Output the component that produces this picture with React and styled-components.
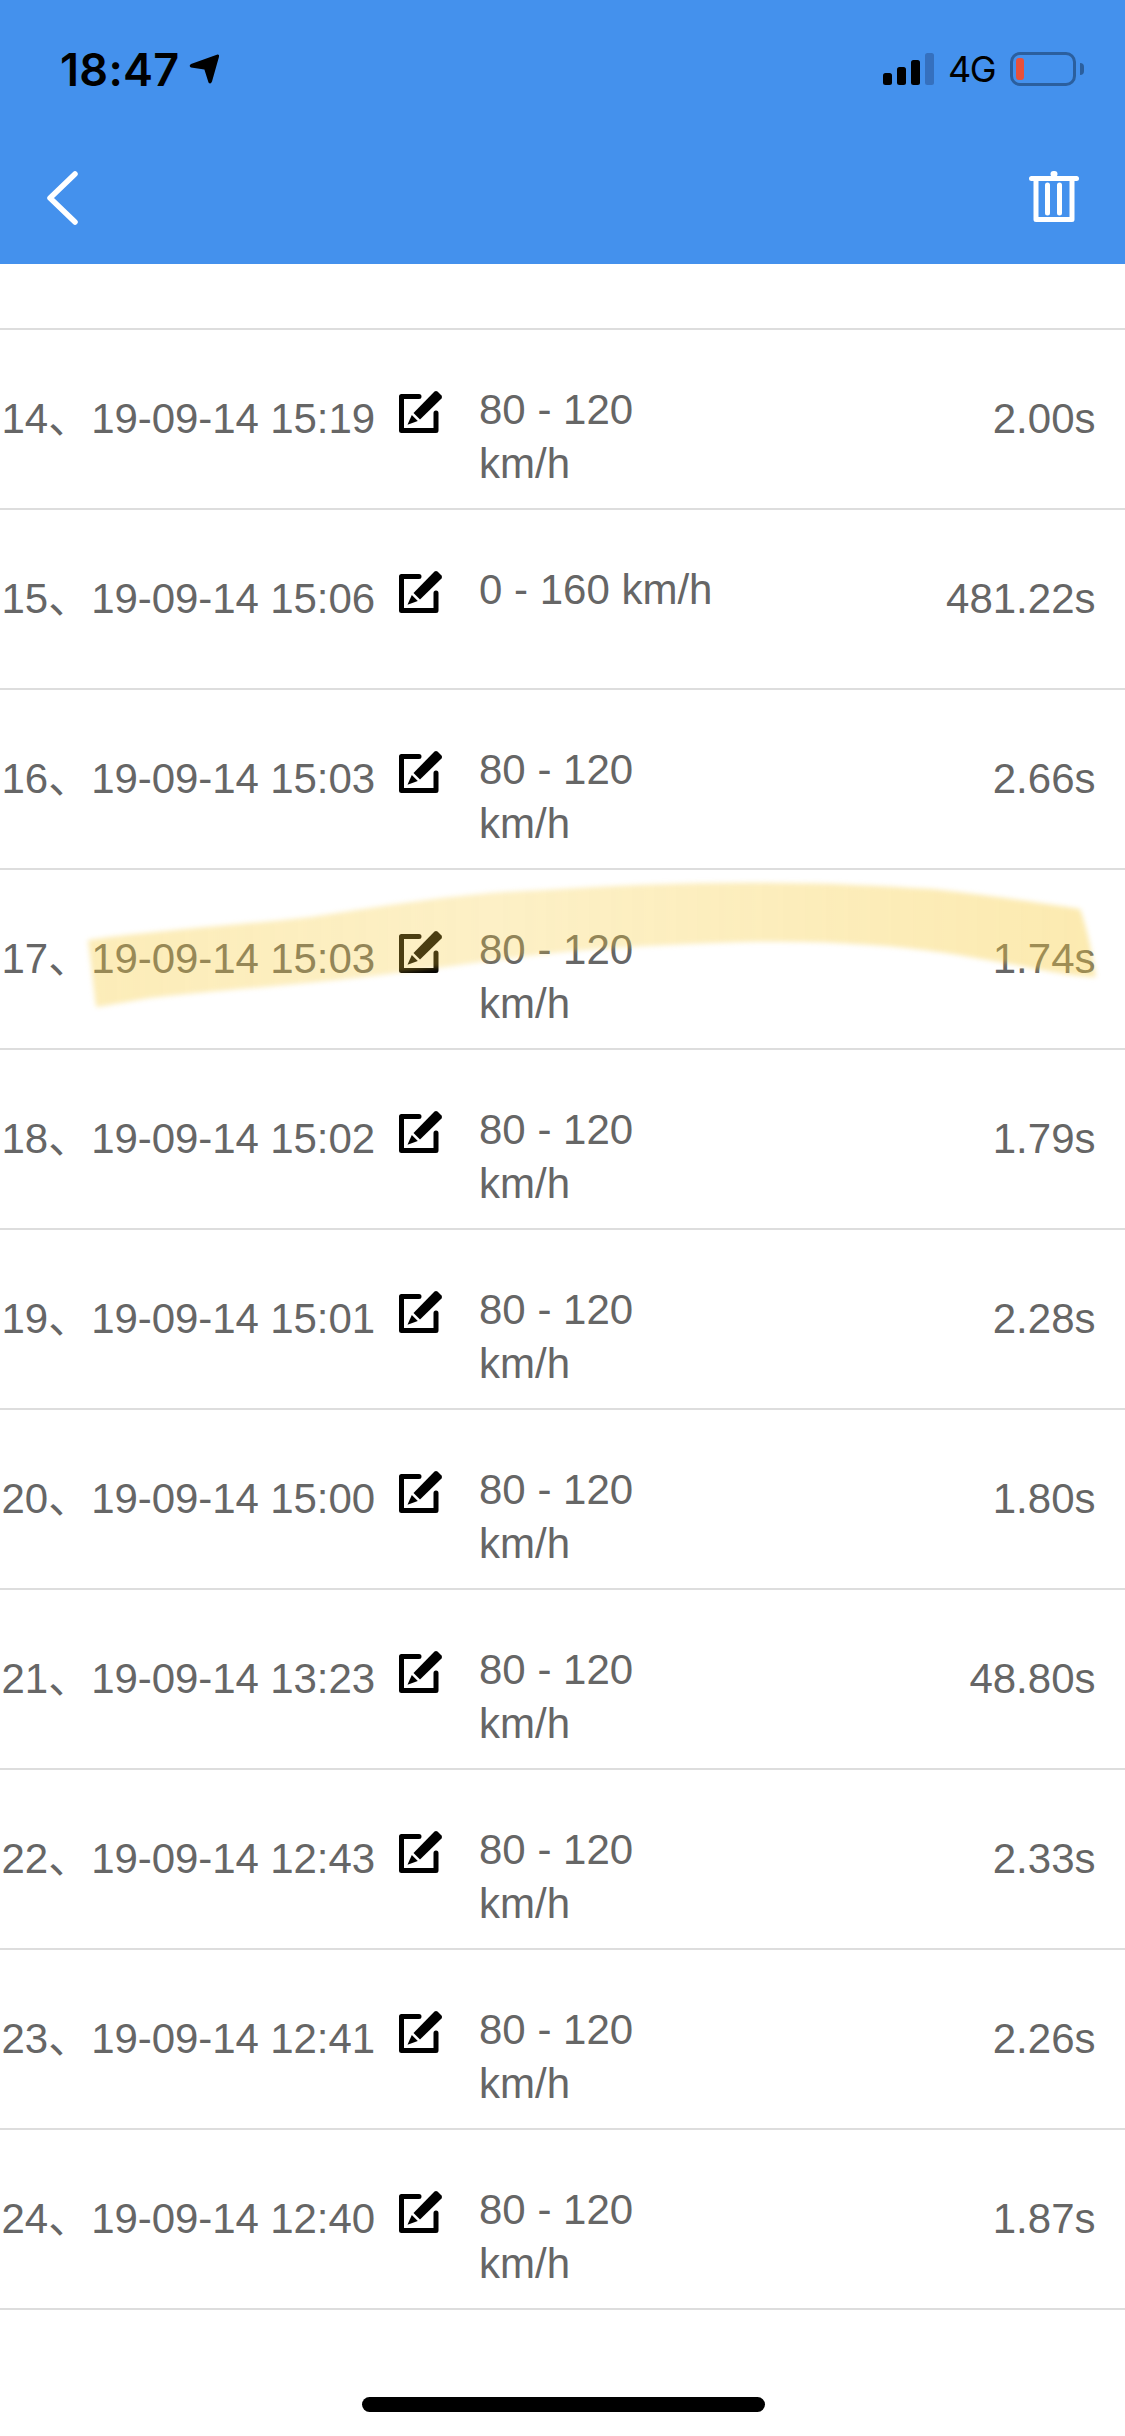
import React from "react";
import styled, { createGlobalStyle } from "styled-components";

const Global = createGlobalStyle`
  html, body { margin: 0; padding: 0; background: #fff; }
  #root { width: 1125px; height: 2436px; overflow: hidden; }
`;

const Page = styled.div`
  position: relative;
  width: 1125px;
  height: 2436px;
  background: #fff;
  display: flex;
  flex-direction: column;
  font-family: "Liberation Sans", "Noto Sans CJK SC", sans-serif;
`;

const Header = styled.header`
  height: 264px;
  background: #4491ed;
  display: flex;
  flex-direction: column;
  flex: none;
`;

const StatusBar = styled.div`
  height: 138px;
  display: flex;
  align-items: center;
  padding: 0 42px 0 60px;
  color: #000;
  box-sizing: border-box;
`;

const Time = styled.span`
  font-family: Inter, "Liberation Sans", sans-serif;
  font-size: 45px;
  font-weight: 600;
  line-height: 1;
  letter-spacing: 0.3px;
`;

const Spacer = styled.div`
  flex: 1;
`;

const Signal = styled.div`
  display: flex;
  align-items: flex-end;
  gap: 5px;
  height: 32px;
`;

const Bar = styled.i`
  display: block;
  width: 9px;
  height: ${(p) => p.$h}px;
  border-radius: 2.5px;
  background: ${(p) => (p.$dim ? "#3570be" : "#000")};
`;

const Net = styled.span`
  font-family: Inter, "Liberation Sans", sans-serif;
  font-size: 36px;
  font-weight: 400;
  line-height: 1;
  letter-spacing: -1.5px;
  margin: 0 15px 0 13.5px;
`;

const Battery = styled.div`
  position: relative;
  box-sizing: border-box;
  width: 66px;
  height: 34px;
  border: 3px solid #2b5f9e;
  border-radius: 10px;
  padding: 3px;
  margin-right: 7px;
`;

const BatteryFill = styled.div`
  width: 8px;
  height: 22px;
  border-radius: 3px;
  background: #e8503a;
`;

const BatteryNub = styled.div`
  position: absolute;
  right: -11px;
  top: 8px;
  width: 4px;
  height: 12px;
  border-radius: 0 6px 6px 0;
  background: #2b5f9e;
`;

const NavBar = styled.nav`
  height: 126px;
  display: flex;
  align-items: flex-start;
  justify-content: space-between;
  padding: 33px 46px 0 46px;
  box-sizing: border-box;
`;

const List = styled.main`
  padding-top: 64px;
  flex: none;
`;

const Row = styled.div`
  position: relative;
  box-sizing: border-box;
  height: 180px;
  border-top: 2px solid #ddd;
  display: grid;
  grid-template-columns: 398px 81px 245px 1fr;
  padding-right: 29.5px;
  color: #666;
  font-size: 42px;
  line-height: 53px;
`;

const RowEnd = styled.div`
  height: 2px;
  background: #ddd;
`;

const DateCell = styled.div`
  padding: 62px 0 0 1.5px;
  white-space: nowrap;
`;

const DateText = styled.span`
  margin-left: 1px;
  letter-spacing: -0.08px;
`;

const IconCell = styled.div`
  padding-top: 60px;
  line-height: 0;
`;

const RangeCell = styled.div`
  padding-top: 53px;
  line-height: 54px;
`;

const DurationCell = styled.div`
  padding-top: 62px;
  text-align: right;
  white-space: nowrap;
`;

const Highlight = styled.svg`
  position: absolute;
  left: 0;
  top: -10px;
  width: 1125px;
  height: 160px;
  pointer-events: none;
  filter: blur(2.5px);
`;

const HomeBar = styled.div`
  position: absolute;
  left: 362px;
  bottom: 24px;
  width: 403px;
  height: 15px;
  border-radius: 8px;
  background: #000;
`;

const ArrowIcon = styled.svg`
  margin-left: 8px;
`;

const EditIcon = () => (
  <svg width="46" height="46" viewBox="0 0 46 46">
    <path
      d="M21 6.5H3.5V40.5H38V23"
      fill="none"
      stroke="#000"
      strokeWidth="5"
      strokeLinejoin="round"
      strokeLinecap="round"
    />
    <path d="M36.5 1.5 Q38 .5 39.5 1.5 L43.5 5.5 Q44.5 7 43.5 8.5 L22 29.5 L15.5 23 Z" fill="#000" />
    <path d="M13.8 25 L19.8 31 L9.5 34.8 Z" fill="#000" />
  </svg>
);

const rows = [
  ["14", "19-09-14 15:19", "80 - 120 km/h", "2.00s"],
  ["15", "19-09-14 15:06", "0 - 160 km/h", "481.22s"],
  ["16", "19-09-14 15:03", "80 - 120 km/h", "2.66s"],
  ["17", "19-09-14 15:03", "80 - 120 km/h", "1.74s", true],
  ["18", "19-09-14 15:02", "80 - 120 km/h", "1.79s"],
  ["19", "19-09-14 15:01", "80 - 120 km/h", "2.28s"],
  ["20", "19-09-14 15:00", "80 - 120 km/h", "1.80s"],
  ["21", "19-09-14 13:23", "80 - 120 km/h", "48.80s"],
  ["22", "19-09-14 12:43", "80 - 120 km/h", "2.33s"],
  ["23", "19-09-14 12:41", "80 - 120 km/h", "2.26s"],
  ["24", "19-09-14 12:40", "80 - 120 km/h", "1.87s"],
];

export default function App() {
  return (
    <Page>
      <Global />
      <Header>
        <StatusBar>
          <Time>18:47</Time>
          <ArrowIcon width="32" height="32" viewBox="0 0 32 32">
            <path
              d="M29.5 1.6 Q31.6 1.4 31 3.8 L24 28.5 Q22.5 32 20.5 29.5 L16.4 16.6 L3 14.4 Q.4 13 3 11 Z"
              fill="#000"
            />
          </ArrowIcon>
          <Spacer />
          <Signal>
            <Bar $h={12} />
            <Bar $h={18} />
            <Bar $h={25} />
            <Bar $h={32} $dim />
          </Signal>
          <Net>4G</Net>
          <Battery>
            <BatteryFill />
            <BatteryNub />
          </Battery>
        </StatusBar>
        <NavBar>
          <svg width="32" height="54" viewBox="0 0 32 54">
            <path
              d="M29 3 L4 27 L29 51"
              fill="none"
              stroke="#fff"
              strokeWidth="5.5"
              strokeLinecap="round"
              strokeLinejoin="round"
            />
          </svg>
          <svg width="50" height="52" viewBox="0 0 50 52">
            <path d="M2.5 7.5H47.5" stroke="#fff" strokeWidth="5" strokeLinecap="round" />
            <path d="M24.5 3H25.5" stroke="#fff" strokeWidth="6" strokeLinecap="round" />
            <path
              d="M7 8V48.5H43V8"
              fill="none"
              stroke="#fff"
              strokeWidth="5"
              strokeLinejoin="round"
            />
            <path d="M18.5 14V42M30.5 14V42" stroke="#fff" strokeWidth="5" strokeLinecap="round" />
          </svg>
        </NavBar>
      </Header>
      <List>
        {rows.map(([n, date, range, dur, marked]) => (
          <Row key={n}>
            <DateCell>
              {n}、<DateText>{date}</DateText>
            </DateCell>
            <IconCell>
              <EditIcon />
            </IconCell>
            <RangeCell>{range}</RangeCell>
            <DurationCell>{dur}</DurationCell>
            {marked && (
              <Highlight viewBox="0 860 1125 160">
                <defs>
                  <linearGradient id="stroke" x1="0" y1="0" x2="1" y2="0">
                    <stop offset="0" stopColor="#f7cb3a" stopOpacity="0.36" />
                    <stop offset="0.4" stopColor="#f7cb3a" stopOpacity="0.29" />
                    <stop offset="1" stopColor="#f7cb3a" stopOpacity="0.4" />
                  </linearGradient>
                </defs>
                <path
                  d="M88 940 C160 930 240 925 311 917 C390 905 470 892 544 890 C620 885 700 882 777 883 C830 883 880 886 932 889 C985 895 1035 902 1080 909 C1088 930 1092 955 1096 977 C1060 975 1035 968 1010 964 C960 955 920 948 870 945 C830 942 790 941 746 942 C690 944 630 946 575 951 C505 958 440 968 373 976 C300 985 220 990 150 998 C130 1001 112 1005 96 1007 C93 985 91 962 88 940 Z"
                  fill="url(#stroke)"
                />
              </Highlight>
            )}
          </Row>
        ))}
        <RowEnd />
      </List>
      <HomeBar />
    </Page>
  );
}
